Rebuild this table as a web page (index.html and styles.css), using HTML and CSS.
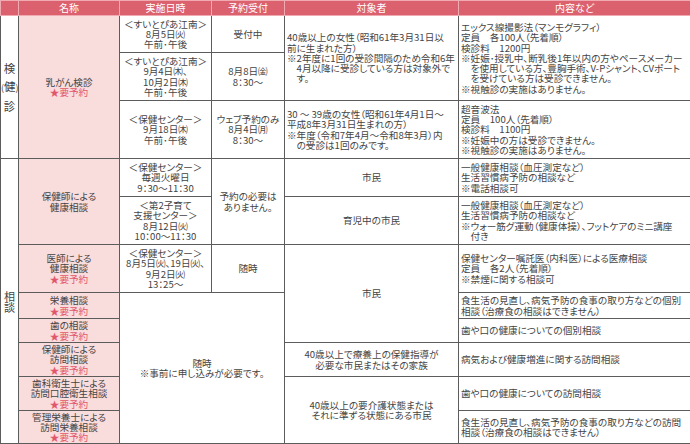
FILE: index.html
```html
<!DOCTYPE html>
<html lang="ja">
<head>
<meta charset="utf-8">
<title>乳がん検診・健康相談</title>
<link rel="stylesheet" href="styles.css">
</head>
<body>
<table class="tbl">
<colgroup>
<col class="c1"><col class="c2"><col class="c3"><col class="c4"><col class="c5"><col class="c6">
</colgroup>
<tr class="h">
<th></th><th>名称</th><th>実施日時</th><th>予約受付</th><th>対象者</th><th>内容など</th>
</tr>
<tr class="r1">
<td rowspan="3" class="cat">検<br><span class="pr">(</span>健<span class="pr">)</span><br>診</td>
<td rowspan="3" class="nm">乳がん検診<br><span class="rsv">★要予約</span></td>
<td>＜すいとぴあ江南＞<br>8月5日㈫<br>午前･午後</td>
<td>受付中</td>
<td rowspan="2" class="left"><div>40歳以上の女性（昭和61年3月31日以<br>前に生まれた方）</div><div class="note">※2年度に1回の受診間隔のため令和6年<br>4月以降に受診している方は対象外で<br>す。</div></td>
<td rowspan="2" class="left"><div>エックス線撮影法（マンモグラフィ）<br>定員　各100人（先着順）<br>検診料　1200円</div><div class="note">※妊娠･授乳中、断乳後1年以内の方やペースメーカー<br>を使用している方、豊胸手術、V-Pシャント、CVポート<br>を受けている方は受診できません。</div><div class="note">※視触診の実施はありません。</div></td>
</tr>
<tr class="r2">
<td>＜すいとぴあ江南＞<br>9月4日㈭、<br>10月2日㈭<br>午前･午後</td>
<td>8月8日㈮<br>8：30～</td>
</tr>
<tr class="r3">
<td>＜保健センター＞<br>9月18日㈭<br>午前･午後</td>
<td>ウェブ予約のみ<br>8月4日㈪<br>8：30～</td>
<td class="left"><div>30 ～ 39歳の女性（昭和61年4月1日～<br>平成8年3月31日生まれの方）</div><div class="note">※年度（令和7年4月～令和8年3月）内<br>の受診は1回のみです。</div></td>
<td class="left"><div>超音波法<br>定員　100人（先着順）<br>検診料　1100円</div><div class="note">※妊娠中の方は受診できません。</div><div class="note">※視触診の実施はありません。</div></td>
</tr>
<tr class="r4">
<td rowspan="8" class="cat cat2">相<br>談</td>
<td rowspan="2" class="nm">保健師による<br>健康相談</td>
<td>＜保健センター＞<br>毎週火曜日<br>9：30～11：30</td>
<td rowspan="2">予約の必要は<br>ありません。</td>
<td>市民</td>
<td class="left"><div>一般健康相談（血圧測定など）<br>生活習慣病予防の相談など</div><div class="note">※電話相談可</div></td>
</tr>
<tr class="r5">
<td>＜第2子育て<br>支援センター＞<br>8月12日㈫<br>10：00～11：30</td>
<td>育児中の市民</td>
<td class="left"><div>一般健康相談（血圧測定など）<br>生活習慣病予防の相談など</div><div class="note">※ウォー筋グ運動（健康体操）、フットケアのミニ講座<br>付き</div></td>
</tr>
<tr class="r6">
<td class="nm">医師による<br>健康相談<br><span class="rsv">★要予約</span></td>
<td>＜保健センター＞<br>8月5日㈫、19日㈫、<br>9月2日㈫<br>13：25～</td>
<td>随時</td>
<td rowspan="3">市民</td>
<td class="left"><div>保健センター嘱託医（内科医）による医療相談<br>定員　各2人（先着順）</div><div class="note">※禁煙に関する相談可</div></td>
</tr>
<tr class="r7">
<td class="nm">栄養相談<br><span class="rsv">★要予約</span></td>
<td rowspan="5" colspan="2">随時<br>※事前に申し込みが必要です。</td>
<td class="left">食生活の見直し、病気予防の食事の取り方などの個別<br>相談（治療食の相談はできません）</td>
</tr>
<tr class="r8">
<td class="nm">歯の相談<br><span class="rsv">★要予約</span></td>
<td class="left">歯や口の健康についての個別相談</td>
</tr>
<tr class="r9">
<td class="nm">保健師による<br>訪問相談<br><span class="rsv">★要予約</span></td>
<td>40歳以上で療養上の保健指導が<br>必要な市民またはその家族</td>
<td class="left">病気および健康増進に関する訪問相談</td>
</tr>
<tr class="r10">
<td class="nm">歯科衛生士による<br>訪問口腔衛生相談<br><span class="rsv">★要予約</span></td>
<td rowspan="2">40歳以上の要介護状態または<br>それに準ずる状態にある市民</td>
<td class="left">歯や口の健康についての訪問相談</td>
</tr>
<tr class="r11">
<td class="nm">管理栄養士による<br>訪問栄養相談<br><span class="rsv">★要予約</span></td>
<td class="left">食生活の見直し、病気予防の食事の取り方などの訪問<br>相談（治療食の相談はできません）</td>
</tr>
</table>
</body>
</html>
```

FILE: styles.css
```css
html, body {
  margin: 0;
  padding: 0;
  background: #fff;
}
body {
  font-family: "Noto Sans CJK JP", "Noto Sans", sans-serif;
  font-size: 9.6px;
  line-height: 10.3px;
  color: #444;
  font-feature-settings: "palt";
}
.tbl {
  border-collapse: collapse;
  table-layout: fixed;
  width: 690px;
}
.c1 { width: 18px; }
.c2 { width: 101px; }
.c3 { width: 92px; }
.c4 { width: 73px; }
.c5 { width: 174px; }
.c6 { width: 232px; }
.tbl th,
.tbl td {
  border: 1px solid #5c5c5c;
  padding: 0 2px;
  vertical-align: middle;
  text-align: center;
  white-space: nowrap;
  overflow: hidden;
}
.tbl th {
  background: #dc616e;
  color: #fff;
  font-size: 10px;
  font-weight: normal;
  border-color: #f0aab1;
  padding: 0;
}
.h { height: 15px; }
.r1 { height: 37px; }
.r2 { height: 48px; }
.r3 { height: 58px; }
.r4 { height: 38px; }
.r5 { height: 48px; }
.r6 { height: 48px; }
.r7 { height: 26px; }
.r8 { height: 24px; }
.r9 { height: 34px; }
.r10 { height: 34px; }
.r11 { height: 33px; }
.nm { background: #f9dcdc; }
.rsv { color: #e2566b; }
.tbl td.left { text-align: left; }
.note {
  padding-left: 1em;
  text-indent: -1em;
}
.tbl td.cat {
  padding: 0;
  font-size: 11.5px;
  line-height: 18px;
}
.tbl td.cat2 {
  font-size: 11px;
  line-height: 11px;
  padding-top: 2px;
}
.pr {
  font-size: 9px;
}
```
